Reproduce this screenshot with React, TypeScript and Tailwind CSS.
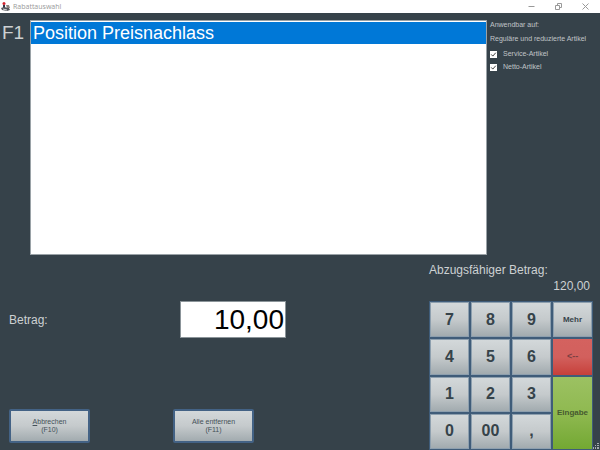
import { useState } from "react";

const digitKey =
  "border border-[#8d9fae] bg-linear-to-b from-[#d3d8da] via-[#c5cacc] to-[#a2abaf] text-base font-bold text-[#36434a]";

const actionButton =
  "h-[34px] w-[81px] rounded-xs border-2 border-[#436285] bg-linear-to-b from-[#d3d8da] via-[#c5cacc] to-[#a2abaf] text-[7px] leading-2 text-[#445058]";

function TitleBar() {
  return (
    <header className="flex h-[13px] items-center bg-white text-[#999999]">
      <svg className="ml-px h-[11px] w-[9px]" viewBox="0 0 9 11">
        <path d="M2 4h2v3H2z" fill="#33384a" />
        <path d="M0 7l3-1 5 1 1 2-3 1-5-1z" fill="#55585f" />
        <path d="M5 4h3l1 3H6z" fill="#8b8580" />
        <path d="M2 8l4 1" stroke="#d8d8d8" strokeWidth="1" />
        <circle cx="3" cy="2.5" r="1.5" fill="#d32530" />
      </svg>
      <h1 className="ml-[3px] flex-1 font-['Open_Sans',sans-serif] text-[7px] leading-3">Rabattauswahl</h1>
      <div className="flex gap-5 pr-[11px]">
        <button aria-label="Minimieren">
          <svg className="h-[7px] w-[7px]" viewBox="0 0 7 7" fill="none" stroke="currentColor">
            <path d="M0.5 3.5h6" />
          </svg>
        </button>
        <button aria-label="Wiederherstellen">
          <svg className="h-[7px] w-[7px]" viewBox="0 0 7 7" fill="none" stroke="currentColor">
            <path d="M0.5 2.5h4v4h-4zM2.5 2V0.5h4v4H5" />
          </svg>
        </button>
        <button aria-label="Schließen">
          <svg className="h-[7px] w-[7px]" viewBox="0 0 7 7" fill="none" stroke="currentColor">
            <path d="M0.5 0.5l6 6M6.5 0.5l-6 6" />
          </svg>
        </button>
      </div>
    </header>
  );
}

function Option({ label }: { label: string }) {
  const [checked, setChecked] = useState(true);

  return (
    <label className="mt-[5px] flex h-2 items-center gap-[6px]">
      <span className="grid">
        <input
          type="checkbox"
          checked={checked}
          onChange={() => setChecked(!checked)}
          className="col-start-1 row-start-1 h-[7px] w-[7px] appearance-none bg-white"
        />
        {checked && (
          <svg
            className="pointer-events-none col-start-1 row-start-1 h-[7px] w-[7px]"
            viewBox="0 0 7 7"
            fill="none"
            stroke="#444444"
          >
            <path d="M1.2 3.4l1.6 1.7 3-3.4" />
          </svg>
        )}
      </span>
      {label}
    </label>
  );
}

function Keypad() {
  return (
    <div className="grid flex-1 grid-cols-4 grid-rows-4 gap-[2px] bg-[#3f5c79] p-px">
      <button className={digitKey}>7</button>
      <button className={digitKey}>8</button>
      <button className={digitKey}>9</button>
      <button className="border border-[#8d9fae] bg-linear-to-b from-[#d3d8da] via-[#c5cacc] to-[#a2abaf] text-[8px] font-bold text-[#36434a]">
        Mehr
      </button>
      <button className={digitKey}>4</button>
      <button className={digitKey}>5</button>
      <button className={digitKey}>6</button>
      <button className="bg-linear-to-b from-[#d4625f] via-[#d2605d] to-[#c63f3a] text-[9px] font-bold text-[#7b3f42]">
        &lt;--
      </button>
      <button className={digitKey}>1</button>
      <button className={digitKey}>2</button>
      <button className={digitKey}>3</button>
      <button className="row-span-2 bg-linear-to-b from-[#9cc162] via-[#8fb950] to-[#73a832] text-[8px] font-bold text-[#46592f]">
        Eingabe
      </button>
      <button className={digitKey}>0</button>
      <button className={digitKey}>00</button>
      <button className={digitKey}>,</button>
    </div>
  );
}

export default function App() {
  const [amount, setAmount] = useState("10,00");

  return (
    <div className="relative flex min-h-screen flex-col bg-[#36424a] font-['Liberation_Sans',Arial,sans-serif] text-[#cdd1d3]">
      <TitleBar />

      <div className="flex pt-[7px]">
        <div className="w-[30px] pt-[1px] pl-[2px] text-[19px] leading-6">F1</div>
        <ul className="h-[235px] flex-1 border border-[#9aa2a7] bg-white pt-px">
          <li className="h-[22px] bg-[#0078d7] pl-[2px] text-[18px] leading-[22px] text-white">
            Position Preisnachlass
          </li>
        </ul>
        <div className="w-[113px] pt-px pl-[3px] text-[7px] leading-2 text-[#c0c5c8]">
          <p>Anwendbar auf:</p>
          <p className="mt-[6px] mb-[7px]">Reguläre und reduzierte Artikel</p>
          <Option label="Service-Artikel" />
          <Option label="Netto-Artikel" />
        </div>
      </div>

      <div className="flex flex-1">
        <div className="flex flex-1 flex-col justify-between pt-[46px] pb-[7px] pl-[9px]">
          <div className="flex items-center">
            <label htmlFor="betrag" className="w-[171px] text-xs">
              Betrag:
            </label>
            <input
              id="betrag"
              value={amount}
              onChange={(e) => setAmount(e.target.value)}
              className="h-[37px] w-[106px] border border-[#8b9499] bg-white pr-px text-right text-[28px] leading-8 text-black"
            />
          </div>
          <div className="flex gap-[83px]">
            <button className={actionButton}>
              <u>A</u>bbrechen
              <br />
              (F10)
            </button>
            <button className={actionButton}>
              Alle entfernen
              <br />
              (F11)
            </button>
          </div>
        </div>

        <div className="mr-[7px] flex w-[164px] flex-col">
          <div className="pt-[7px] pr-[3px] pb-[7px] text-xs leading-4">
            <p className="whitespace-nowrap">Abzugsfähiger Betrag:</p>
            <p className="text-right">120,00</p>
          </div>
          <Keypad />
        </div>
      </div>

      <svg className="absolute right-0 bottom-0 h-[7px] w-[7px]" viewBox="0 0 7 7" fill="#a5abaf">
        <path d="M4 0h2v1H4zM2 2h1v1H2zM4 2h2v1H4zM0 4h1v2H0zM2 4h1v2H2zM4 4h2v2H4z" />
      </svg>
    </div>
  );
}
